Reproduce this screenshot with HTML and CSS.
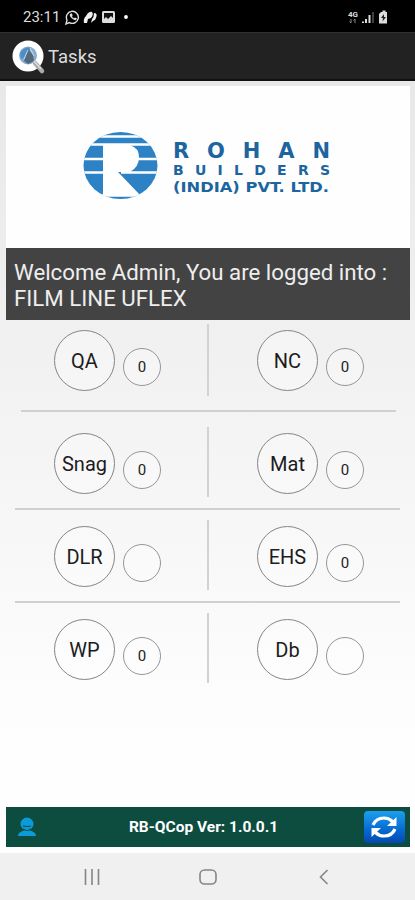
FILE: index.html
```html
<!DOCTYPE html>
<html lang="en">
<head>
  <meta charset="UTF-8">
  <meta name="viewport" content="width=device-width, initial-scale=1">
  <title>Tasks</title>
  <link rel="stylesheet" href="styles.css">
</head>
<body>
  <div class="status-bar">
    <span class="time">23:11</span>
    <svg class="status-left" width="66" height="16" viewBox="0 0 66 16">
      <path d="M1 15l1-4a6 6 0 1 1 2.500 2.600z" fill="none" stroke="#ddd" stroke-width="1.400"/>
      <path d="M5 5q-1 2 2 4.500t4 1.500l1-1.500-2-1-1 .8q-1.500-.6-2-2l.7-1-1-2z" fill="#ddd"/>
      <path d="M19 14q-1-4 2-7 3-5 6-4 2 2-1 6l-3 1-1 4zM26 14l1-4q2-2 2-6 4 0 2 5-1 3-3 3z" fill="#eee"/>
      <rect x="37" y="2" width="13" height="12" rx="1.500" fill="#ddd"/>
      <path d="M39 4h9v5l-2-2-3 3-2-2-2 2z" fill="#111"/>
      <circle cx="61" cy="8" r="1.900" fill="#fff"/>
    </svg>
    <svg class="status-right" width="42" height="16" viewBox="0 0 42 16">
      <text x="0" y="8" class="network" textLength="10">4G</text>
      <path d="M3 10v4M1.500 12.500L3 14M7 14v-4M5.500 11.500L7 10" stroke="#888" fill="none"/>
      <path d="M15 14v-1.500M18 14v-4M21.500 14V6" stroke="#ddd" stroke-width="2"/>
      <path d="M25 14V3" stroke="#555" stroke-width="1.500"/>
      <path d="M33 3h1.500V1.500h3V3H39v11.500h-8V5z" fill="#ddd"/>
      <path d="M36 5l-3 4h2l-.5 3.500L38 8h-2z" fill="#222"/>
    </svg>
  </div>

  <div class="title-bar">
    <svg width="34" height="36" viewBox="0 0 34 36">
      <circle cx="16" cy="17" r="15.500" fill="#fff"/>
      <circle cx="16" cy="16.500" r="9" fill="#86add0"/>
      <path d="M8 14q5-7 11-5l-4 9-6 2z" fill="#4b8fc9"/>
      <path d="M16 10l5 6 1 6-6 3-4-3z" fill="#52697b"/>
      <path d="M16 11l-4 9M18 9l4 8" stroke="#cfdde6"/>
      <path d="M23 24l7 8" stroke="#aaa" stroke-width="4.500" stroke-linecap="round"/>
      <path d="M22 22l7 8" stroke="#ddd" stroke-width="1.500"/>
    </svg>
    <span>Tasks</span>
  </div>

  <div class="content">
    <div class="logo">
      <svg width="404" height="162" viewBox="0 0 404 162">
        <clipPath id="ball"><ellipse cx="114.500" cy="79.500" rx="37" ry="33.500"/></clipPath>
        <g clip-path="url(#ball)">
          <path d="M77 46h75v68H77z" fill="#2c82c4"/>
          <path d="M97 59h27q9 3 9 12 0 10-9 15h-12l23 24H97z" fill="#fff"/>
          <path d="M77 50.500h75M77 58.500h75M77 73h22M132 73h20M77 86.500h22M115 86.500h37M77 109.500h75" stroke="#fff" stroke-width="2.500"/>
        </g>
        <text x="167" y="71.500" class="logo-name" textLength="157">ROHAN</text>
        <text x="167" y="88.500" class="logo-line" textLength="157">BUILDERS</text>
        <text x="167" y="106" class="logo-small" textLength="156" lengthAdjust="spacingAndGlyphs">(INDIA) PVT. LTD.</text>
      </svg>
    </div>
    <div class="welcome">Welcome Admin, You are logged into :<br>FILM LINE UFLEX</div>

    <div class="row first">
      <div class="cell"><div class="task">QA</div><div class="count">0</div></div>
      <div class="cell"><div class="task">NC</div><div class="count">0</div></div>
    </div>
    <div class="line short"></div>
    <div class="row second">
      <div class="cell"><div class="task">Snag</div><div class="count">0</div></div>
      <div class="cell"><div class="task">Mat</div><div class="count">0</div></div>
    </div>
    <div class="line"></div>
    <div class="row">
      <div class="cell"><div class="task">DLR</div><div class="count"></div></div>
      <div class="cell"><div class="task">EHS</div><div class="count">0</div></div>
    </div>
    <div class="line"></div>
    <div class="row">
      <div class="cell"><div class="task">WP</div><div class="count">0</div></div>
      <div class="cell"><div class="task">Db</div><div class="count"></div></div>
    </div>

    <div class="footer">
      <svg width="20" height="20" viewBox="0 0 20 20">
        <circle cx="10" cy="7" r="6.500" fill="#0c9ad8"/>
        <path d="M1 19q0-4 6-5.500h6q6 1.500 6 5.500z" fill="#0c9ad8"/>
        <path d="M6 9q4 1 8 0M6.500 11.500q3.500 4 7 0" fill="none" stroke="#0d4d40" stroke-width="1"/>
      </svg>
      <span>RB-QCop Ver: 1.0.0.1</span>
      <div class="refresh">
        <svg width="30" height="24" viewBox="0 0 30 24">
          <path d="M4 10q3-7 11-7 5 0 8.500 3.500M26 14q-3 7-11 7-5 0-8.500-3.500" fill="none" stroke="#fff" stroke-width="3.200"/>
          <path d="M27.500 2v9H18zM2.500 22v-9H12z" fill="#fff"/>
        </svg>
      </div>
    </div>
  </div>

  <div class="nav-bar">
    <svg width="16" height="16" viewBox="0 0 16 16"><path d="M1.500 0v16M8 0v16M14.500 0v16"/></svg>
    <svg width="18" height="16" viewBox="0 0 18 16"><rect x="1" y="1" width="16" height="14" rx="4.500"/></svg>
    <svg width="16" height="16" viewBox="0 0 16 16"><path d="M11.500 1L4.500 8l7 7"/></svg>
  </div>
</body>
</html>
```

FILE: styles.css
```css
* {
  box-sizing: border-box;
}

body {
  margin: 0;
  height: 900px;
  display: flex;
  flex-direction: column;
  font-family: Roboto, sans-serif;
  background: #fefefe;
  overflow: hidden;
}

svg {
  display: block;
  flex: none;
}

.status-bar {
  height: 32px;
  background: #000;
  color: #ddd;
  display: flex;
  align-items: center;
  padding: 2px 25px 0 23px;
}

.time {
  width: 42px;
  font-size: 15px;
  white-space: nowrap;
}

.status-right {
  margin-left: auto;
}

.network {
  font-size: 8px;
  font-weight: bold;
  fill: #ddd;
}

.title-bar {
  height: 49px;
  background: #222;
  border-top: 1px solid #303030;
  border-bottom: 2px solid #111;
  color: #ddd;
  display: flex;
  align-items: center;
  gap: 2px;
  padding: 1px 0 0 12px;
  font-size: 18.5px;
}

.content {
  height: 772px;
  display: flex;
  flex-direction: column;
  padding: 5px 5px 6px 6px;
  background: linear-gradient(#e8e8e8, #f1f1f1 35%, #fefefe 85%);
}

.logo {
  height: 162px;
  background: #fefefe;
}

.logo text {
  font-family: "DejaVu Sans", sans-serif;
  font-weight: bold;
  fill: #1c659f;
}

.logo-name {
  font-size: 21px;
}

.logo-line {
  font-size: 14px;
}

.logo-small {
  font-size: 14px;
}

.welcome {
  height: 72px;
  padding: 11px 8px;
  background: #434343;
  color: #eee;
  font-size: 22.25px;
  line-height: 26px;
  white-space: nowrap;
}

.row {
  height: 70px;
  display: flex;
  margin-top: 10px;
}

.first {
  height: 72px;
  margin-top: 4px;
}

.second {
  height: 70px;
  margin-top: 15px;
}

.cell {
  flex: 0 0 203px;
  display: flex;
  gap: 8px;
  padding: 6px 0 0 48px;
}

.cell:first-child {
  border-right: 2px solid #d2d2d2;
}

.task {
  flex: none;
  width: 61px;
  height: 61px;
  border: 1.5px solid #858585;
  border-radius: 50%;
  background: rgba(255, 255, 255, 0.3);
  display: flex;
  align-items: center;
  justify-content: center;
  font-size: 20px;
  color: #1c1c1c;
}

.count {
  flex: none;
  width: 38px;
  height: 38px;
  margin-top: 18px;
  border: 1px solid #969696;
  border-radius: 50%;
  background: rgba(255, 255, 255, 0.3);
  display: flex;
  align-items: center;
  justify-content: center;
  font-size: 15px;
  color: #222;
}

.line {
  height: 2px;
  flex: none;
  margin: 11px 10px 0 9px;
  background: #d0d0d0;
}

.short {
  margin: 14px 14px 0 15px;
}

.footer {
  height: 40px;
  margin-top: auto;
  padding: 0 5px 0 11px;
  background: #0d4d40;
  color: #fff;
  display: flex;
  align-items: center;
  justify-content: space-between;
  font-size: 15.5px;
  font-weight: bold;
}

.footer span {
  padding-left: 6px;
}

.refresh {
  width: 41px;
  height: 32px;
  border-radius: 4px;
  background: linear-gradient(#1aa0ee, #0769d0 60%, #0348b0);
  display: flex;
  align-items: center;
  justify-content: center;
}

.nav-bar {
  height: 47px;
  background: #f0f0f0;
  display: flex;
  align-items: center;
  justify-content: space-between;
  padding: 1px 83px 0 84px;
}

.nav-bar svg {
  fill: none;
  stroke: #858585;
  stroke-width: 1.6;
}
```
